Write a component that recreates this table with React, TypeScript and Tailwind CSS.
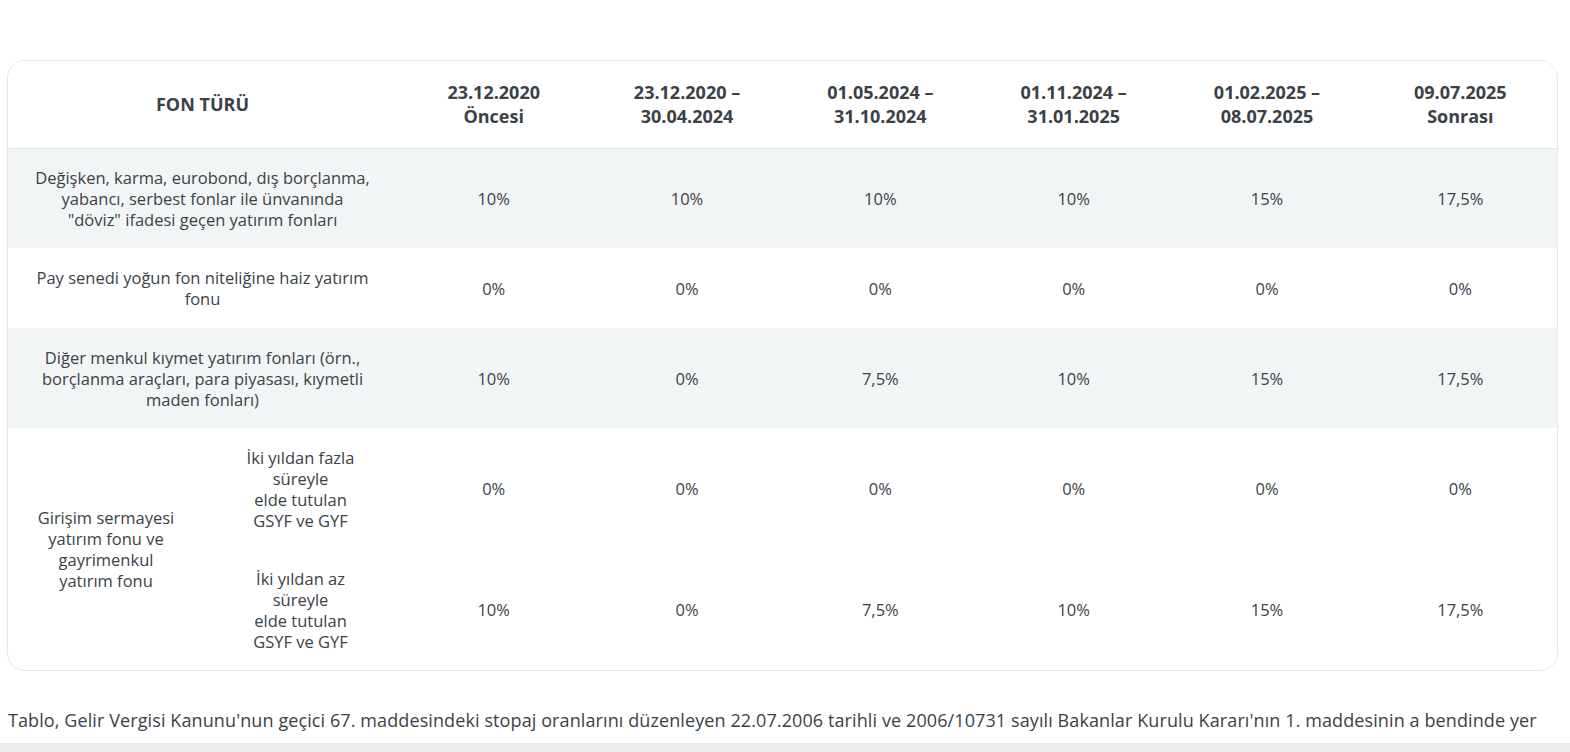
const periods = [
  ["23.12.2020", "Öncesi"],
  ["23.12.2020 –", "30.04.2024"],
  ["01.05.2024 –", "31.10.2024"],
  ["01.11.2024 –", "31.01.2025"],
  ["01.02.2025 –", "08.07.2025"],
  ["09.07.2025", "Sonrası"],
];

const rows = [
  {
    label: ["Değişken, karma, eurobond, dış borçlanma,", "yabancı, serbest fonlar ile ünvanında", "\"döviz\" ifadesi geçen yatırım fonları"],
    values: ["10%", "10%", "10%", "10%", "15%", "17,5%"],
    shaded: true,
    h: "h-[100px]",
  },
  {
    label: ["Pay senedi yoğun fon niteliğine haiz yatırım", "fonu"],
    values: ["0%", "0%", "0%", "0%", "0%", "0%"],
    shaded: false,
    h: "h-[80px]",
  },
  {
    label: ["Diğer menkul kıymet yatırım fonları (örn.,", "borçlanma araçları, para piyasası, kıymetli", "maden fonları)"],
    values: ["10%", "0%", "7,5%", "10%", "15%", "17,5%"],
    shaded: true,
    h: "h-[100px]",
  },
];

const sub = [
  { label: ["İki yıldan fazla", "süreyle", "elde tutulan", "GSYF ve GYF"], values: ["0%", "0%", "0%", "0%", "0%", "0%"] },
  { label: ["İki yıldan az", "süreyle", "elde tutulan", "GSYF ve GYF"], values: ["10%", "0%", "7,5%", "10%", "15%", "17,5%"] },
];

function Lines({ lines }: { lines: string[] }) {
  return (
    <>
      {lines.map((l, i) => (
        <div key={i}>{l}</div>
      ))}
    </>
  );
}

export default function App() {
  return (
    <div className="min-h-[752px] bg-white font-['Open_Sans',sans-serif] text-[#3b4247]">
      <div className="h-[60px]" />
      <div className="ml-[7px] mr-[12px] overflow-hidden rounded-[18px] border border-[#e6e9ea]">
        <table className="w-full table-fixed border-collapse text-center">
          <colgroup>
            <col className="w-[196px]" />
            <col className="w-[193px]" />
            {periods.map((_, i) => (
              <col key={i} />
            ))}
          </colgroup>
          <thead>
            <tr className="h-[87px] border-b border-[#e6e9ea]">
              <th colSpan={2} className="text-[18px] font-bold">FON TÜRÜ</th>
              {periods.map((p, i) => (
                <th key={i} className="text-[18px] font-bold leading-[24px]">
                  <Lines lines={p} />
                </th>
              ))}
            </tr>
          </thead>
          <tbody className="text-[16.5px] leading-[21px]">
            {rows.map((r, i) => (
              <tr key={i} className={`${r.h} ${r.shaded ? "bg-[#f2f5f5]" : "bg-white"}`}>
                <td colSpan={2} className="px-1">
                  <Lines lines={r.label} />
                </td>
                {r.values.map((v, j) => (
                  <td key={j}>{v}</td>
                ))}
              </tr>
            ))}
            {sub.map((s, i) => (
              <tr key={i} className="h-[121px]">
                {i === 0 && (
                  <td rowSpan={2} className="px-1">
                    <Lines lines={["Girişim sermayesi", "yatırım fonu ve", "gayrimenkul", "yatırım fonu"]} />
                  </td>
                )}
                <td>
                  <Lines lines={s.label} />
                </td>
                {s.values.map((v, j) => (
                  <td key={j}>{v}</td>
                ))}
              </tr>
            ))}
          </tbody>
        </table>
      </div>
      <p className="mt-[37px] pl-[8px] text-[18px] leading-[24px] tracking-[0.1px] whitespace-nowrap overflow-hidden">
        Tablo, Gelir Vergisi Kanunu'nun geçici 67. maddesindeki stopaj oranlarını düzenleyen 22.07.2006 tarihli ve 2006/10731 sayılı Bakanlar Kurulu Kararı'nın 1. maddesinin a bendinde yer
      </p>
      <div className="mt-[11px] h-[10px] bg-[#ebebeb]" />
    </div>
  );
}
